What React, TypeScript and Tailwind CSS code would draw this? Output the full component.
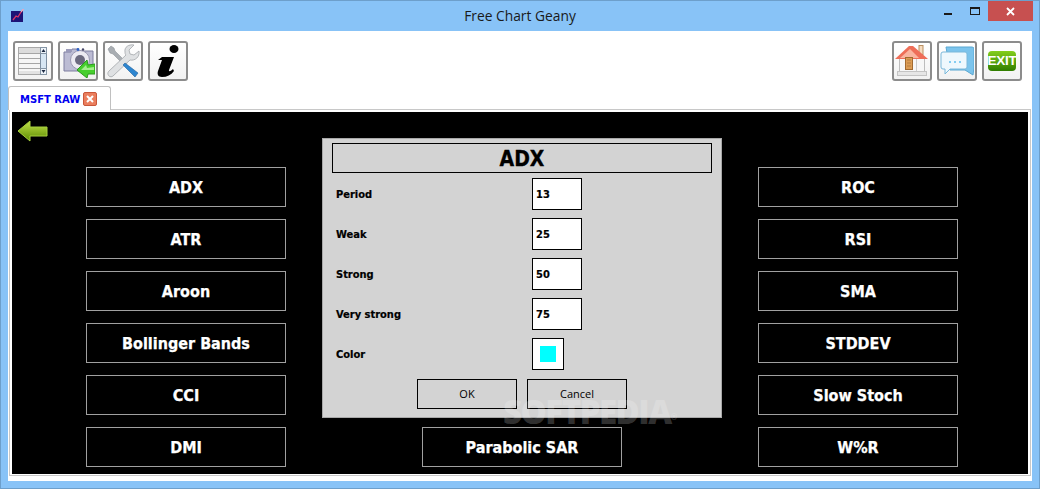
const LABEL = "w-[196px] pt-[2px] text-[11px] font-bold text-black [font-stretch:condensed] [-webkit-text-stroke:0.2px_black]";

function ToolBtn({ children }: { children: React.ReactNode }) {
  return (
    <div className="flex h-10 w-10 items-center justify-center rounded-[3px] border-2 border-[#8c8c8c] bg-gradient-to-b from-white to-[#f2f2f2]">
      {children}
    </div>
  );
}

function ListIcon() {
  return (
    <svg width="32" height="32" viewBox="0 0 32 32">
      <rect x="1.5" y="2.5" width="28" height="27" fill="#f6f6f6" stroke="#a8a8a8" />
      <rect x="2" y="3" width="21" height="5" fill="#dcdcdc" />
      <path d="M2 8.5h21M2 13.5h21M2 18.5h21M2 23.5h21" stroke="#a6a6a6" />
      <rect x="2" y="26" width="21" height="3" fill="#e2e2e2" />
      <rect x="23.5" y="2.5" width="6" height="27" fill="#d7e6f3" stroke="#7d8ea0" />
      <rect x="23.5" y="2.5" width="6" height="6" fill="#eef4fa" stroke="#8595a5" />
      <rect x="23.5" y="23.5" width="6" height="6" fill="#eef4fa" stroke="#8595a5" />
      <path d="M26.5 4l2 3h-4zM26.5 28l-2-3h4z" fill="#1d2a44" />
    </svg>
  );
}

function CameraIcon() {
  return (
    <svg width="34" height="34" viewBox="0 0 34 34">
      <path d="M3 8h7l1-3h6l2 2h13v20H3z" fill="#bcbcd4" stroke="#7f7fa0" />
      <rect x="5" y="5" width="6" height="3" fill="#9a9aba" />
      <circle cx="19" cy="16" r="9.5" fill="#eceaf2" stroke="#9a98b2" />
      <circle cx="19" cy="16" r="5" fill="#6c6a80" />
      <circle cx="17" cy="5.5" r="1.4" fill="#2f62c6" />
      <circle cx="22" cy="5.5" r="1.2" fill="#444466" />
      <path d="M16 26l10-10 1 5 7-1v10h-7l-1 4z" fill="#47cf2e" stroke="#2c9a1e" />
      <path d="M20 26l5-5 1 3 7-1v3z" fill="#a6ee8f" />
    </svg>
  );
}

function ToolsIcon() {
  return (
    <svg width="34" height="34" viewBox="0 0 34 34">
      <path d="M5 2l3 2 1 3 12 12-2 3L7 10 4 9 2 5z" fill="#a8adb2" stroke="#858a90" strokeWidth="0.5" />
      <path d="M33 7l-5 4-4-1-1-4 5-5c-5-1-10 2-9 7 0 1 0 2 1 3L3 27c-2 2-1 4 0 5s3 1 4 0l17-16c5 1 10-3 9-9z" fill="#dfe1e3" stroke="#a3a7ab" strokeWidth="0.8" />
      <path d="M19 19l13 10-3 4-12-12z" fill="#2e86d0" stroke="#1e5f9c" strokeWidth="0.6" />
    </svg>
  );
}

function InfoIcon() {
  return (
    <svg width="32" height="34" viewBox="0 0 32 34">
      <ellipse cx="22" cy="5" rx="4.5" ry="4" fill="#000" />
      <path d="M10 13h12l-5 13c-.5 1.5 1 2 4-1l1 2c-3 4-7 6-12 6-4 0-5-3-4-6l4-11H6z" fill="#000" />
    </svg>
  );
}

function HomeIcon() {
  return (
    <svg width="34" height="34" viewBox="0 0 34 34">
      <rect x="4.5" y="14.5" width="25" height="14" fill="#f7f7f7" stroke="#bdbdbd" />
      <path d="M21.5 14v15" stroke="#cccccc" />
      <rect x="2.5" y="27.5" width="29" height="4" fill="#e6e6e6" stroke="#c4c4c4" />
      <rect x="24" y="1.5" width="4" height="9" fill="#f6dcc0" stroke="#b98f60" />
      <path d="M0 15L14 2h4l15 13H0z" fill="#ee6e58" />
      <path d="M5 14L15 5l9 9z" fill="#f9b5a0" />
      <rect x="10.5" y="13.5" width="7" height="12" fill="#dc9c54" stroke="#a26a30" />
      <path d="M12 16h4M12 19h4M12 22h4" stroke="#b37c40" />
    </svg>
  );
}

function ChatIcon() {
  return (
    <svg width="34" height="34" viewBox="0 0 34 34">
      <path d="M6 3h26a2 2 0 0 1 2 2v18l-1 8-8-5H10z" fill="#7cc4ec" stroke="#5aa8d2" />
      <path d="M3 8h22a2 2 0 0 1 2 2v13a2 2 0 0 1-2 2H10l-5 5v-5H3a2 2 0 0 1-2-2V10a2 2 0 0 1 2-2z" fill="#eef8fd" stroke="#7ab8da" />
      <path d="M9 17h2v2H9zM14 17h2v2h-2zM19 17h2v2h-2z" fill="#83cdf2" />
    </svg>
  );
}

function ExitIcon() {
  return (
    <div className="flex h-[20px] w-[28px] items-center justify-center rounded-[4px] bg-gradient-to-b from-[#84cf1c] to-[#2f7d00] font-['Liberation_Sans',sans-serif] text-[13.5px] font-bold leading-none tracking-[-0.3px] text-white">
      EXIT
    </div>
  );
}

function Btn({ label }: { label: string }) {
  return (
    <div className="flex h-10 w-[200px] items-center justify-center border border-[#a0a0a0] pt-[2px] text-[16px] font-bold text-white [font-stretch:condensed] [-webkit-text-stroke:0.25px_white]">
      {label}
    </div>
  );
}

function Row({ label, value }: { label: string; value: string }) {
  return (
    <div className="flex h-8 items-center">
      <div className={LABEL}>{label}</div>
      <div className="flex h-8 w-[50px] items-center border border-black bg-white pl-[3px] pt-[2px] text-[11px] font-bold text-black [font-stretch:condensed] [-webkit-text-stroke:0.2px_black]">
        {value}
      </div>
    </div>
  );
}

export default function App() {
  return (
    <div className="flex h-[489px] w-[1040px] flex-col overflow-hidden border border-[#6d9fcb] bg-[#88c3f7] font-['DejaVu_Sans',sans-serif]">
      <div className="relative flex h-[30px] shrink-0 items-center justify-center pt-[1px] font-['Open_Sans',sans-serif] text-[13.8px] text-[#1a1a1a]">
        <svg className="absolute left-[10px] top-[8px]" width="13" height="13" viewBox="0 0 13 13">
          <rect width="12" height="11" y="2" fill="#1c1477" />
          <path d="M2 11l3-4 2 1 3-5" stroke="#d9356a" strokeWidth="1.3" fill="none" />
          <path d="M10 3l2.5-3" stroke="#f4a3b8" strokeWidth="1.3" />
        </svg>
        Free Chart Geany
        <div className="absolute left-[943px] top-[12px] h-[2px] w-[8px] bg-[#1a1a1a]" />
        <div className="absolute left-[969px] top-[6px] h-[8px] w-[10px] border border-t-2 border-[#1a1a1a]" />
        <div className="absolute left-[987px] top-0 flex h-[20px] w-[45px] items-center justify-center bg-[#c75050]">
          <svg width="9" height="9" viewBox="0 0 9 9">
            <path d="M1 1l7 7M8 1L1 8" stroke="#fff" strokeWidth="1.8" />
          </svg>
        </div>
      </div>
      <div className="mx-[7px] flex h-[450px] w-[1024px] shrink-0 flex-col bg-white">
        <div className="flex h-[55px] shrink-0 items-start justify-between px-[5px] pt-[10px] pr-[10px]">
          <div className="flex gap-[5px]">
            <ToolBtn><ListIcon /></ToolBtn>
            <ToolBtn><CameraIcon /></ToolBtn>
            <ToolBtn><ToolsIcon /></ToolBtn>
            <ToolBtn><InfoIcon /></ToolBtn>
          </div>
          <div className="flex gap-[5px]">
            <ToolBtn><HomeIcon /></ToolBtn>
            <ToolBtn><ChatIcon /></ToolBtn>
            <ToolBtn><ExitIcon /></ToolBtn>
          </div>
        </div>
        <div className="relative z-10 -mb-px flex h-[24px] w-[103px] shrink-0 items-center gap-[3px] rounded-t-[3px] border border-b-0 border-[#c0c0c0] bg-white pl-[11px] text-[10px] font-bold text-[#0000f0]">
          <span className="pt-[2px]">MSFT RAW</span>
          <div className="flex h-[14px] w-[14px] items-center justify-center rounded-[2px] border border-[#c9573a] bg-[#ea7e5d]">
            <svg width="8" height="8" viewBox="0 0 8 8">
              <path d="M1 1l6 6M7 1L1 7" stroke="#fff" strokeWidth="2" />
            </svg>
          </div>
        </div>
        <div className="ml-[1px] mr-[1px] flex h-[367px] shrink-0 border border-[#c8c8c8] px-[2px] pb-[1px] pt-[2px]">
          <div className="relative flex h-[362px] w-[1016px] bg-black pl-[74px]">
            <svg className="absolute left-[5px] top-[8px]" width="31" height="22" viewBox="0 0 31 22">
              <defs>
                <linearGradient id="arrow" x1="0" y1="0" x2="0" y2="1">
                  <stop offset="0" stopColor="#c3e34a" />
                  <stop offset="1" stopColor="#5a8a00" />
                </linearGradient>
              </defs>
              <path d="M1 11L13 1v6h17v9H13v5z" fill="url(#arrow)" stroke="#a6cf3c" />
            </svg>
            <div className="flex flex-col gap-3 pt-[55px]">
              {["ADX", "ATR", "Aroon", "Bollinger Bands", "CCI", "DMI"].map((l) => (
                <Btn key={l} label={l} />
              ))}
            </div>
            <div className="ml-[136px] flex flex-col justify-end pb-[7px]">
              <Btn label="Parabolic SAR" />
            </div>
            <div className="ml-[136px] flex flex-col gap-3 pt-[55px]">
              {["ROC", "RSI", "SMA", "STDDEV", "Slow Stoch", "W%R"].map((l) => (
                <Btn key={l} label={l} />
              ))}
            </div>
            <div className="absolute left-[310px] top-[26px] h-[280px] w-[400px] border border-[#a8a8a8] bg-[#d3d3d3] px-[9px] pt-[4px]">
              <div className="flex h-[30px] items-center justify-center border border-black pt-[2px] text-[21px] font-bold leading-none text-black [font-stretch:condensed] [-webkit-text-stroke:0.3px_black]">
                ADX
              </div>
              <div className="mt-[5px] flex flex-col gap-2 pl-[4px]">
                <Row label="Period" value="13" />
                <Row label="Weak" value="25" />
                <Row label="Strong" value="50" />
                <Row label="Very strong" value="75" />
                <div className="flex h-8 items-center">
                  <div className={LABEL}>Color</div>
                  <div className="flex h-8 w-8 items-center justify-center border border-black bg-white">
                    <div className="h-4 w-4 bg-[#00ffff]" />
                  </div>
                </div>
              </div>
              <div className="mt-[9px] flex justify-center gap-[10px] font-['Open_Sans',sans-serif] text-[11px] text-black">
                <div className="flex h-[30px] w-[100px] items-center justify-center border border-black">OK</div>
                <div className="flex h-[30px] w-[100px] items-center justify-center border border-black">Cancel</div>
              </div>
            </div>
            <div className="absolute left-[491px] top-[285px] font-['Open_Sans',sans-serif] text-[33px] font-extrabold leading-[30px] tracking-[-1.5px] text-white/20">
              SOFTPEDIA<sup className="text-[8px]">®</sup>
            </div>
          </div>
        </div>
      </div>
    </div>
  );
}
